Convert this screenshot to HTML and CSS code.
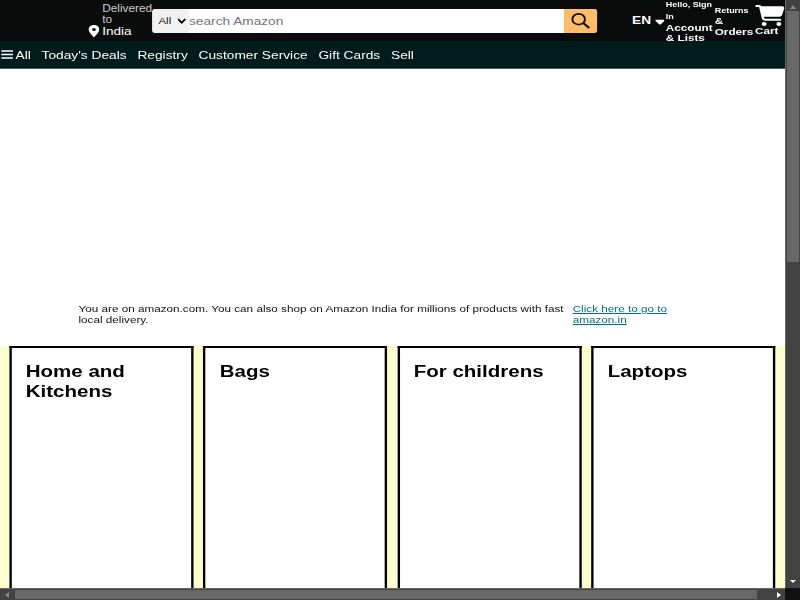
FILE: index.html
```html
<!DOCTYPE html>
<html lang="en">
<head>
<meta charset="utf-8">
<title>Amazon</title>
<link rel="stylesheet" href="styles.css">
</head>
<body>
<div class="window">
  <div class="viewport">
    <div class="page">
      <header class="top">
        <div class="deliver">
          <svg class="pin" viewBox="0 0 384 512" preserveAspectRatio="none"><path fill="#fff" d="M216 499c51-64 168-220 168-307C384 86 298 0 192 0S0 86 0 192c0 87 117 243 168 307 12 15 36 15 48 0zM192 128a64 64 0 1 1 0 128 64 64 0 1 1 0-128z"/></svg>
          <div class="deliver-text"><p class="muted">Delivered to</p><p class="country">India</p></div>
        </div>
        <div class="search">
          <div class="scope"><span>All</span><svg viewBox="0 0 8 6" preserveAspectRatio="none"><path d="M1 1l3 3 3-3" fill="none" stroke="#000" stroke-width="1.5"/></svg></div>
          <div class="query">search Amazon</div>
          <div class="go"><svg viewBox="0 0 18 18" preserveAspectRatio="none"><circle cx="7.200" cy="7" r="6" fill="none" stroke="#0f1111" stroke-width="1.900"/><path d="M11.500 11.300L17.300 17" stroke="#0f1111" stroke-width="2.200"/></svg></div>
        </div>
        <div class="lang"><span>EN</span><svg viewBox="0 0 10 6" preserveAspectRatio="none"><path fill="#fff" d="M1 .8h8q1 .3.3 1.200L5.800 5.200q-.8.6-1.600 0L.7 2Q0 1.100 1 .8z"/></svg></div>
        <div class="account"><p class="small">Hello, Sign In</p><p class="strong">Account &amp; Lists</p></div>
        <div class="orders"><p class="small">Returns</p><p class="strong">&amp; Orders</p></div>
        <div class="cart">
          <svg viewBox="0 0 576 512" preserveAspectRatio="none"><path fill="#fff" d="M0 24C0 10.700 10.700 0 24 0h45.500c22 0 41.500 12.800 50.600 32h411c26.300 0 45.500 25 38.600 50.400l-41 152.300c-8.500 31.400-37 53.300-69.500 53.300H170.700l5.400 28.500c2.200 11.300 12.100 19.500 23.600 19.500H488c13.300 0 24 10.700 24 24s-10.700 24-24 24H199.700c-34.600 0-64.300-24.600-70.700-58.500L77.400 54.500C76.700 50.700 73.400 48 69.500 48H24C10.700 48 0 37.300 0 24zM128 464a48 48 0 1 1 96 0 48 48 0 1 1-96 0zm336-48a48 48 0 1 1 0 96 48 48 0 1 1 0-96z"/></svg>
          <p class="strong">Cart</p>
        </div>
      </header>
      <nav class="panel">
        <a class="all"><svg viewBox="0 0 10 9" preserveAspectRatio="none"><path d="M0 1h10M0 4.500h10M0 8h10" stroke="#fff" stroke-width="1.300"/></svg>All</a>
        <a>Today's Deals</a><a>Registry</a><a>Customer Service</a><a>Gift Cards</a><a>Sell</a>
      </nav>
      <section class="hero">
        <div class="notice">
          <p class="message">You are on amazon.com. You can also shop on Amazon India for millions of products with fast<br>local delivery.</p>
          <a class="link">Click here to go to<br>amazon.in</a>
        </div>
      </section>
      <main class="shop">
        <article class="box"><h2>Home and Kitchens</h2></article>
        <article class="box"><h2>Bags</h2></article>
        <article class="box"><h2>For childrens</h2></article>
        <article class="box"><h2>Laptops</h2></article>
      </main>
    </div>
  </div>
  <div class="vbar">
    <svg viewBox="0 0 6 4"><path d="M0 4l3-4 3 4z" fill="#868686"/></svg>
    <div class="vthumb"></div>
    <svg class="down" viewBox="0 0 6 3"><path d="M0 0l3 3 3-3z" fill="#fff"/></svg>
  </div>
  <div class="hbar">
    <svg viewBox="0 0 4 6"><path d="M4 0L0 3l4 3z" fill="#868686"/></svg>
    <div class="hthumb"></div>
    <svg class="right" viewBox="0 0 4 6"><path d="M0 0l4 3-4 3z" fill="#fff"/></svg>
  </div>
  <div class="corner"></div>
</div>
</body>
</html>
```

FILE: styles.css
```css
* { box-sizing: border-box; margin: 0; padding: 0; }
body { font-family: Arial, "Liberation Sans", sans-serif; overflow: hidden; }
svg { display: block; flex: none; }

.window { display: grid; grid-template: 588px 12px / 785px 15px; width: 800px; height: 600px; }
.viewport { overflow: hidden; }

/* The page is laid out on a narrower column and stretched horizontally. */
.page { width: 666px; height: 588px; transform: scaleX(1.18); transform-origin: 0 0; display: flex; flex-direction: column; background: #fff; }

.top { display: flex; height: 41px; background: #0a0c0b; color: #fff; }
.top > * { flex: none; }
.deliver { display: flex; width: 128.8px; padding-left: 75px; }
.pin { width: 9.3px; height: 12px; margin-top: 25px; }
.deliver-text { width: 44.5px; margin-left: 2.3px; padding-top: 4px; }
.muted { color: #ccc; font-size: 10px; line-height: 10.5px; }
.country { font-size: 11.5px; line-height: 12px; }
.search { display: flex; width: 377px; height: 24px; margin-top: 9px; border-radius: 3px; overflow: hidden; background: #fff; }
.scope { display: flex; align-items: center; width: 31.4px; padding: 0 0 1px 5.5px; gap: 4.8px; background: #f1f1f1; color: #111; font-size: 9.7px; }
.scope svg { width: 8px; height: 7px; margin-top: 2px; }
.query { flex: 1; color: #757575; font-size: 11.6px; line-height: 23px; }
.go { width: 28px; padding: 4px 0 0 6px; background: #febd68; }
.go svg { width: 16px; height: 16px; }
.lang { display: flex; width: 58.4px; padding-left: 29.8px; font-size: 11.6px; font-weight: bold; line-height: 40px; }
.lang svg { width: 8.5px; height: 6px; margin: 19px 0 0 3px; }
.small { font-size: 7.6px; font-weight: bold; }
.strong { font-size: 9.95px; font-weight: bold; line-height: 10.5px; }
.account { width: 41.5px; }
.account .small { line-height: 12px; margin-top: -1px; }
.account .strong { margin-top: -0.5px; }
.orders { width: 34.2px; padding-top: 6px; }
.orders .small { line-height: 10px; }
.cart svg { width: 24.9px; height: 21px; margin-top: 5px; }

.panel { display: flex; gap: 9.1px; height: 28px; background: #001b1c; border-bottom: 1px solid #476363; color: #fff; font-size: 11.65px; line-height: 28px; white-space: nowrap; }
.all { display: flex; gap: 2.5px; padding-left: .5px; }
.all svg { width: 10.2px; height: 9px; margin-top: 9px; }

.hero { height: 277px; padding-top: 235px; background: #fff; }
.notice { display: flex; padding-left: 66.5px; font-size: 9.93px; line-height: 10.5px; color: #0f1111; white-space: nowrap; }
.message { width: 418.8px; }
.link { color: #007185; text-decoration: underline; }

.shop { display: grid; grid-template-columns: repeat(4, 155.9px); gap: 8.5px; flex: 1; padding-left: 8.1px; background: #fdfecd; }
.box { border: 2px solid #000; border-bottom: 0; background: #fff; padding: 14px 11.7px; }
.box h2 { font-size: 17.4px; line-height: 19.5px; }

.vbar { background: #424242; border-left: 1px solid #686868; display: flex; flex-direction: column; align-items: center; padding-top: 5px; }
.vbar svg { width: 6px; height: 4px; }
.vthumb { width: 12px; height: 251px; margin-top: 2px; background: #686868; }
.vbar .down { height: 3px; margin-top: 318px; }
.hbar { background: #424242; border-top: 1px solid #686868; display: flex; align-items: center; padding-left: 5px; }
.hbar svg { width: 4px; height: 6px; }
.hthumb { width: 742px; height: 9px; margin-left: 6px; background: #686868; }
.hbar .right { margin-left: 20px; }
.corner { background: #111; }
```
